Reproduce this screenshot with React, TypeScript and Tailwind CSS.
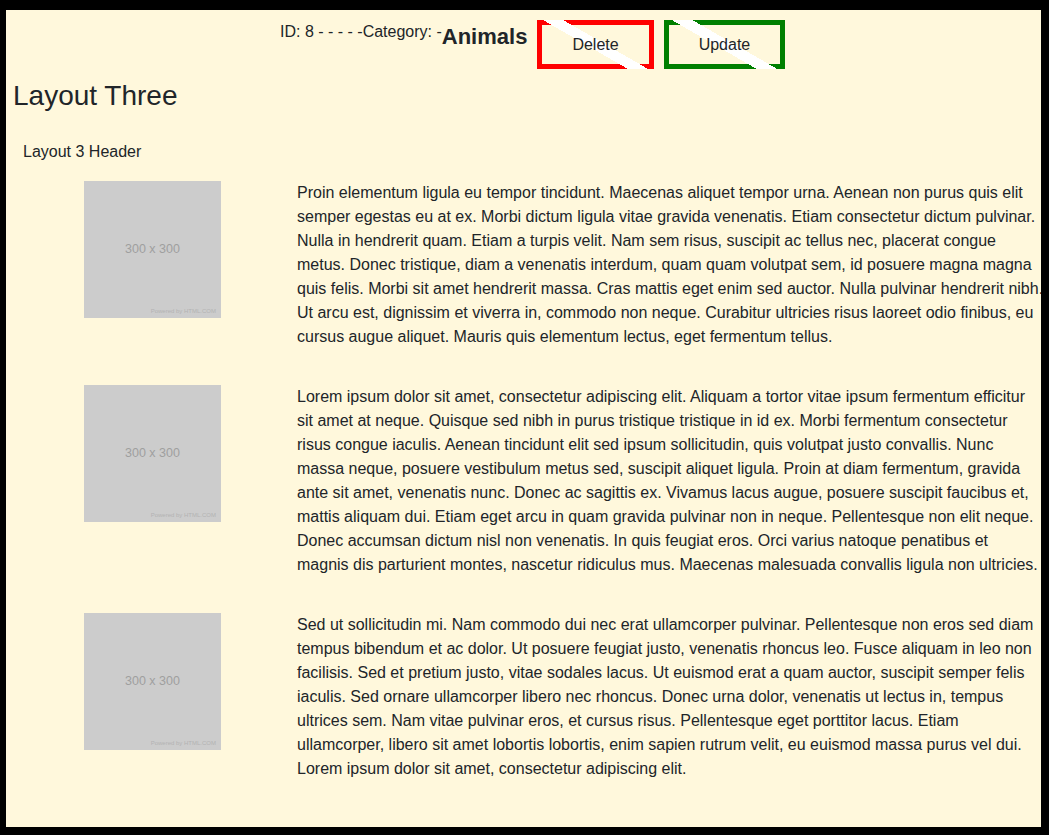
import React from "react";

const paragraphs = [
  "Proin elementum ligula eu tempor tincidunt. Maecenas aliquet tempor urna. Aenean non purus quis elit semper egestas eu at ex. Morbi dictum ligula vitae gravida venenatis. Etiam consectetur dictum pulvinar. Nulla in hendrerit quam. Etiam a turpis velit. Nam sem risus, suscipit ac tellus nec, placerat congue metus. Donec tristique, diam a venenatis interdum, quam quam volutpat sem, id posuere magna magna quis felis. Morbi sit amet hendrerit massa. Cras mattis eget enim sed auctor. Nulla pulvinar hendrerit nibh. Ut arcu est, dignissim et viverra in, commodo non neque. Curabitur ultricies risus laoreet odio finibus, eu cursus augue aliquet. Mauris quis elementum lectus, eget fermentum tellus.",
  "Lorem ipsum dolor sit amet, consectetur adipiscing elit. Aliquam a tortor vitae ipsum fermentum efficitur sit amet at neque. Quisque sed nibh in purus tristique tristique in id ex. Morbi fermentum consectetur risus congue iaculis. Aenean tincidunt elit sed ipsum sollicitudin, quis volutpat justo convallis. Nunc massa neque, posuere vestibulum metus sed, suscipit aliquet ligula. Proin at diam fermentum, gravida ante sit amet, venenatis nunc. Donec ac sagittis ex. Vivamus lacus augue, posuere suscipit faucibus et, mattis aliquam dui. Etiam eget arcu in quam gravida pulvinar non in neque. Pellentesque non elit neque. Donec accumsan dictum nisl non venenatis. In quis feugiat eros. Orci varius natoque penatibus et magnis dis parturient montes, nascetur ridiculus mus. Maecenas malesuada convallis ligula non ultricies.",
  "Sed ut sollicitudin mi. Nam commodo dui nec erat ullamcorper pulvinar. Pellentesque non eros sed diam tempus bibendum et ac dolor. Ut posuere feugiat justo, venenatis rhoncus leo. Fusce aliquam in leo non facilisis. Sed et pretium justo, vitae sodales lacus. Ut euismod erat a quam auctor, suscipit semper felis iaculis. Sed ornare ullamcorper libero nec rhoncus. Donec urna dolor, venenatis ut lectus in, tempus ultrices sem. Nam vitae pulvinar eros, et cursus risus. Pellentesque eget porttitor lacus. Etiam ullamcorper, libero sit amet lobortis lobortis, enim sapien rutrum velit, eu euismod massa purus vel dui. Lorem ipsum dolor sit amet, consectetur adipiscing elit.",
];

// placeholder image (300x300 from html.com, shown at 137px)
function Placeholder() {
  return (
    <div className="relative flex h-[137px] w-[137px] items-center justify-center bg-[#cccccc]">
      <span className="text-[12.5px] leading-none text-[#9f9f9f]">300 x 300</span>
      <span className="absolute bottom-[4px] right-[5px] text-[6px] leading-none text-[#b3b3b3]">
        Powered by HTML.COM
      </span>
    </div>
  );
}

function StripeButton({ label, border }: { label: string; border: string }) {
  return (
    <button className={`relative flex h-[49px] items-center justify-center border-[5px] bg-transparent px-[30px] text-base text-[#212529] ${border}`}>
      {/* white diagonal stripe over the border */}
      <span className="absolute -inset-[5px] bg-[linear-gradient(30deg,transparent_45%,#ffffff_45%,#ffffff_55%,transparent_55%)]" />
      <span className="relative">{label}</span>
    </button>
  );
}

export default function App() {
  return (
    <div className="h-[835px] w-full bg-black pt-[10px] pl-[6px] pr-[8px] pb-[8px] font-['Liberation_Sans',Arial,sans-serif] text-[#212529]">
      <div className="h-full overflow-hidden bg-[#fff8dc]">
        {/* TOP BAR */}
        <div className="flex items-start pt-[10px] pl-[274px]">
          <span className="text-base leading-6">ID: 8 - - - - -Category: -</span>
          <span className="text-[22px] font-bold leading-[33px]">Animals</span>
          <div className="ml-[10px]">
            <StripeButton label="Delete" border="border-[#ff0000]" />
          </div>
          <div className="ml-[10px]">
            <StripeButton label="Update" border="border-[#008000]" />
          </div>
        </div>

        <h2 className="mt-[10px] pl-[7px] text-[28px] leading-[1.2]">Layout Three</h2>

        <div className="pl-[17px]">
          <div className="mt-[27px] text-base leading-6">Layout 3 Header</div>

          <div className="mt-[17px] flex flex-col gap-[36px]">
            {paragraphs.map((p, i) => (
              <div key={i} className="flex items-start">
                <div className="flex w-[259px] shrink-0 justify-center">
                  <Placeholder />
                </div>
                <p className="ml-[15px] w-[747px] shrink-0 text-base leading-6">{p}</p>
              </div>
            ))}
          </div>
        </div>
      </div>
    </div>
  );
}
